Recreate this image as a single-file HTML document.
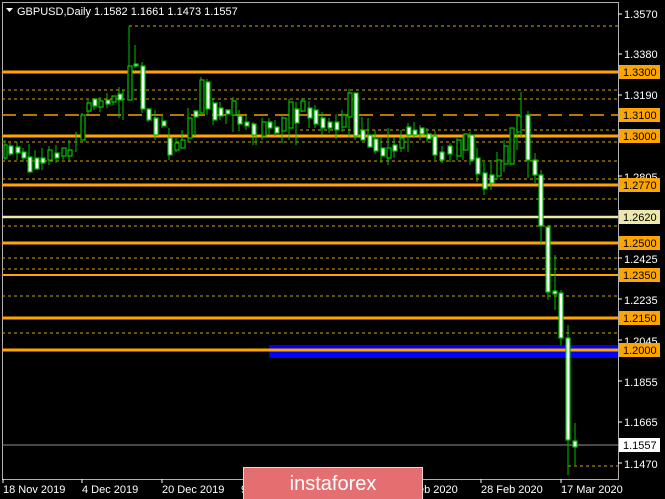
<!DOCTYPE html>
<html><head><meta charset="utf-8"><style>
body{margin:0;background:#000;width:665px;height:499px;overflow:hidden;font-family:"Liberation Sans",sans-serif}
</style></head><body>
<svg width="665" height="499" xmlns="http://www.w3.org/2000/svg" style="position:absolute;left:0;top:0">
<rect width="665" height="499" fill="#000"/>
<rect x="2.5" y="2.5" width="616" height="477" fill="none" stroke="#b0b0b0" stroke-width="1"/>
<g stroke="#d4a400" stroke-width="1" stroke-dasharray="3,3">
<line x1="129" y1="26" x2="618" y2="26"/>
<line x1="2" y1="90" x2="618" y2="90"/>
<line x1="2" y1="99" x2="618" y2="99"/>
<line x1="300" y1="130" x2="618" y2="130"/>
<line x1="2" y1="142" x2="618" y2="142"/>
<line x1="2" y1="161" x2="618" y2="161"/>
<line x1="2" y1="179" x2="618" y2="179"/>
<line x1="2" y1="199" x2="618" y2="199"/>
<line x1="2" y1="226" x2="618" y2="226"/>
<line x1="2" y1="258" x2="618" y2="258"/>
<line x1="2" y1="269" x2="618" y2="269"/>
<line x1="2" y1="296" x2="618" y2="296"/>
<line x1="2" y1="333" x2="618" y2="333"/>
<line x1="568" y1="466" x2="618" y2="466"/>
</g>
<line x1="2" y1="115" x2="618" y2="115" stroke="#f0a000" stroke-width="1.5" stroke-dasharray="14,7"/>
<rect x="269" y="345" width="349" height="13" fill="#0000ff"/>
<g stroke="#ffa500" stroke-width="3">
<line x1="2" y1="72" x2="618" y2="72"/>
<line x1="2" y1="136" x2="618" y2="136"/>
<line x1="2" y1="185" x2="618" y2="185"/>
<line x1="2" y1="243" x2="618" y2="243"/>
<line x1="2" y1="318" x2="618" y2="318"/>
<line x1="2" y1="350" x2="618" y2="350"/>
</g>
<line x1="2" y1="275" x2="618" y2="275" stroke="#ffa500" stroke-width="2"/>
<line x1="2" y1="217" x2="618" y2="217" stroke="#eee8aa" stroke-width="2.5"/>
<line x1="2" y1="445" x2="618" y2="445" stroke="#8a8f96" stroke-width="1"/>
<g stroke="#00c000" stroke-width="1">
<!-- wicks -->
<path d="M5 140V160M10 143V156M17 142V160M23 148V162M29 144V172M35 150V168M42 148V170M49 146V165M56 145V163M63 148V160M69 140V162M76 132V152M82 113V140M88 100V114M94 98V110M100 97V112M107 93V108M113 96V105M119 87V118M123 90V120M129 26V100M135 45V68M142 62V113M148 108V122M155 110V140M162 115V128M169 128V160M176 138V152M182 130V148M188 108V142M195 110V136M201 77V115M207 79V115M213 98V125M220 102V120M226 109V124M233 97V132M239 110V131M246 115V130M253 122V145M256 128V145M262 118V140M269 118V135M275 120V136M282 115V143M289 99V140M296 102V145M302 98V112M309 101V128M315 105V128M322 112V135M329 118V133M336 114V139M342 110V132M349 89V137M355 95V140M362 117V140M368 118V140M375 130V154M381 138V163M388 128V165M394 137V158M401 130V152M408 123V152M414 122V138M420 125V140M427 128V142M435 131V160M442 146V163M450 143V162M457 138V160M463 135V160M470 132V165M477 148V182M484 162V195M491 160V190M497 152V180M504 140V172M511 132V165M517 120V150M521 92V138M528 111V178M535 153V183M541 170V245M548 225V300M555 255V310M561 290V345M568 325V475M575 423V465"/>
</g>
<g stroke="#00c000" stroke-width="1.2">
<!-- bullish bodies (black) -->
<path fill="#000" d="M4 145h3v13h-3zM48 150h4v10h-4zM62 148h4v8h-4zM68 150h4v6h-4zM81 115h4v25h-4zM87 103h4v8h-4zM99 101h4v6h-4zM112 96h4v6h-4zM128 66h4v34h-4zM175 143h4v7h-4zM181 140h4v8h-4zM188 118h4v20h-4zM200 80h4v33h-4zM232 101h4v14h-4zM262 122h4v14h-4zM282 118h4v13h-4zM289 102h4v26h-4zM301 101h4v10h-4zM342 115h4v12h-4zM348 93h4v24h-4zM387 148h4v10h-4zM400 138h4v10h-4zM457 140h4v16h-4zM464 134h4v16h-4zM497 160h4v16h-4zM504 146h4v18h-4zM510 128h4v36h-4zM517 116h4v16h-4z"/>
<!-- bearish bodies (white) -->
<path fill="#fff" d="M9 146h4v8h-4zM16 147h4v6h-4zM22 152h4v6h-4zM28 157h4v15h-4zM35 158h4v11h-4zM41 158h4v5h-4zM55 153h4v5h-4zM93 99h4v7h-4zM106 100h4v4h-4zM118 94h4v6h-4zM134 64h4v2h-4zM141 66h4v43h-4zM147 109h4v11h-4zM154 118h4v17h-4zM162 121h4v5h-4zM168 138h4v17h-4zM194 111h4v6h-4zM206 82h4v27h-4zM213 103h4v17h-4zM219 108h4v8h-4zM226 110h4v4h-4zM238 116h4v8h-4zM245 122h4v4h-4zM252 124h4v11h-4zM268 122h4v6h-4zM275 127h4v6h-4zM295 109h4v14h-4zM308 108h4v10h-4zM314 110h4v14h-4zM321 118h4v10h-4zM328 122h4v6h-4zM335 122h4v8h-4zM354 93h4v43h-4zM361 130h4v10h-4zM368 135h4v12h-4zM374 139h4v12h-4zM381 148h4v8h-4zM393 145h4v6h-4zM407 127h4v8h-4zM413 130h4v5h-4zM420 128h4v6h-4zM427 134h4v5h-4zM433 136h4v19h-4zM440 152h4v8h-4zM448 146h4v8h-4zM470 135h4v25h-4zM476 158h4v16h-4zM483 173h4v16h-4zM490 175h4v8h-4zM526 115h4v45h-4zM533 160h4v15h-4zM539 175h4v51h-4zM546 227h4v65h-4zM553 291h4v3h-4zM559 293h4v45h-4zM566 338h4v102h-4zM573 441h4v6h-4z"/>
</g>
<!-- price labels -->
<g font-family="Liberation Sans,sans-serif" font-size="11" fill="#fff">
<g stroke="#fff"><line x1="618" y1="14" x2="622" y2="14"/><line x1="618" y1="54" x2="622" y2="54"/><line x1="618" y1="95" x2="622" y2="95"/><line x1="618" y1="176" x2="622" y2="176"/><line x1="618" y1="258" x2="622" y2="258"/><line x1="618" y1="299" x2="622" y2="299"/><line x1="618" y1="340" x2="622" y2="340"/><line x1="618" y1="381" x2="622" y2="381"/><line x1="618" y1="422" x2="622" y2="422"/><line x1="618" y1="463" x2="622" y2="463"/></g>
<text x="624" y="18">1.3570</text>
<text x="624" y="58">1.3380</text>
<text x="624" y="99">1.3190</text>
<text x="624" y="181">1.2805</text>
<text x="624" y="263">1.2425</text>
<text x="624" y="304">1.2235</text>
<text x="624" y="345">1.2045</text>
<text x="624" y="386">1.1855</text>
<text x="624" y="426">1.1665</text>
<text x="624" y="468">1.1470</text>
</g>
<g font-family="Liberation Sans,sans-serif" font-size="11" fill="#000">
<rect x="619" y="65" width="41" height="14" fill="#ffa500"/><text x="623" y="76">1.3300</text>
<rect x="619" y="108" width="41" height="14" fill="#ffa500"/><text x="623" y="119">1.3100</text>
<rect x="619" y="129" width="41" height="14" fill="#ffa500"/><text x="623" y="140">1.3000</text>
<rect x="619" y="178" width="41" height="14" fill="#ffa500"/><text x="623" y="189">1.2770</text>
<rect x="619" y="210" width="41" height="14" fill="#eee8aa"/><text x="623" y="221">1.2620</text>
<rect x="619" y="236" width="41" height="14" fill="#ffa500"/><text x="623" y="247">1.2500</text>
<rect x="619" y="268" width="41" height="14" fill="#ffa500"/><text x="623" y="279">1.2350</text>
<rect x="619" y="311" width="41" height="14" fill="#ffa500"/><text x="623" y="322">1.2150</text>
<rect x="619" y="343" width="41" height="14" fill="#ffa500"/><text x="623" y="354">1.2000</text>
<rect x="619" y="438" width="41" height="14" fill="#fff"/><text x="623" y="449">1.1557</text>
</g>
<!-- date axis -->
<g stroke="#fff"><line x1="3" y1="479" x2="3" y2="483"/><line x1="82" y1="479" x2="82" y2="483"/><line x1="162" y1="479" x2="162" y2="483"/><line x1="481" y1="479" x2="481" y2="483"/><line x1="561" y1="479" x2="561" y2="483"/></g>
<g font-family="Liberation Sans,sans-serif" font-size="11" fill="#fff">
<text x="3" y="493">18 Nov 2019</text>
<text x="82" y="493">4 Dec 2019</text>
<text x="162" y="493">20 Dec 2019</text>
<text x="241" y="493">9</text>
<text x="418" y="493">eb 2020</text>
<text x="481" y="493">28 Feb 2020</text>
<text x="561" y="493">17 Mar 2020</text>
</g>
<!-- title -->
<path d="M6 8h7l-3.5 4z" fill="#fff"/>
<text x="17" y="15" font-family="Liberation Sans,sans-serif" font-size="11" fill="#fff">GBPUSD,Daily  1.1582 1.1661 1.1473 1.1557</text>
<!-- logo -->
<rect x="243.5" y="467.5" width="179" height="32" fill="#e36f70" stroke="#f4d0d0" stroke-width="1"/>
<text x="333" y="490" text-anchor="middle" font-family="Liberation Sans,sans-serif" font-size="20" fill="#fff">instaforex</text>
</svg>
</body></html>
